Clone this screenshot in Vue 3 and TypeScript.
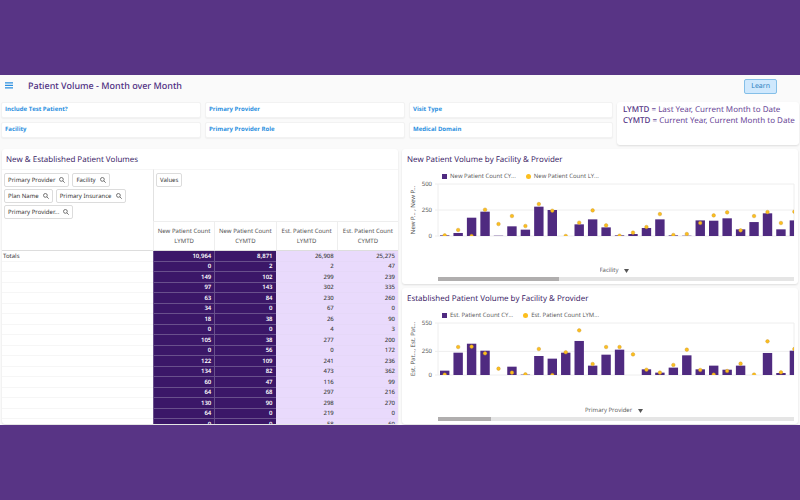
<script setup lang="ts">
interface Chart {
  id: string
  title: string
  legend: [string, string]
  axisTitle: string
  dimension: string
  max: number
  ticks: number[]
  bars: number[]
  dots: number[]
  thumb: number
}

const filters: string[] = [
  'Include Test Patient?', 'Primary Provider', 'Visit Type',
  'Facility', 'Primary Provider Role', 'Medical Domain',
]

const chips: string[] = ['Primary Provider', 'Facility', 'Plan Name', 'Primary Insurance', 'Primary Provider...']

const columns: [string, string][] = [
  ['New Patient Count', 'LYMTD'],
  ['New Patient Count', 'CYMTD'],
  ['Est. Patient Count', 'LYMTD'],
  ['Est. Patient Count', 'CYMTD'],
]

const rows: string[][] = [
  ['10,964', '8,871', '26,908', '25,275'],
  ['0', '2', '2', '47'],
  ['149', '102', '299', '239'],
  ['97', '143', '302', '335'],
  ['63', '84', '230', '260'],
  ['34', '0', '67', '0'],
  ['18', '38', '26', '90'],
  ['0', '0', '4', '3'],
  ['105', '38', '277', '200'],
  ['0', '56', '0', '172'],
  ['122', '109', '241', '236'],
  ['134', '82', '473', '362'],
  ['60', '47', '116', '99'],
  ['64', '68', '297', '216'],
  ['130', '90', '298', '270'],
  ['64', '0', '219', '0'],
  ['0', '0', '58', '60'],
]

const charts: Chart[] = [
  {
    id: 'new',
    title: 'New Patient Volume by Facility & Provider',
    legend: ['New Patient Count CY...', 'New Patient Count LY...'],
    axisTitle: 'New P... , New P...',
    dimension: 'Facility',
    max: 500,
    ticks: [500, 250, 0],
    bars: [6, 29, 176, 234, 3, 93, 61, 282, 250, 0, 112, 160, 83, 6, 19, 77, 160, 6, 3, 150, 147, 170, 64, 134, 218, 64, 150],
    dots: [6, 58, 0, 253, 115, 192, 96, 307, 243, 0, 128, 246, 102, 3, 32, 86, 211, 10, 19, 125, 198, 227, 54, 192, 230, 125, 234],
    thumb: 34,
  },
  {
    id: 'est',
    title: 'Established Patient Volume by Facility & Provider',
    legend: ['Est. Patient Count CY...', 'Est. Patient Count LYM...'],
    axisTitle: 'Est. Pat..., Est. Pat...',
    dimension: 'Primary Provider',
    max: 550,
    ticks: [550, 250, 0],
    bars: [46, 236, 331, 257, 0, 88, 4, 201, 173, 236, 360, 99, 215, 268, 0, 60, 25, 78, 208, 60, 99, 56, 99, 0, 233, 21, 257],
    dots: [4, 296, 300, 229, 67, 25, 7, 275, 0, 240, 472, 116, 296, 296, 218, 56, 25, 106, 268, 53, 4, 42, 120, 4, 356, 28, 275],
    thumb: 15,
  },
]

const PLOT_LEFT = 36
const PLOT_RIGHT = 392
const PLOT_HEIGHT = 52
const BASE = 56
const STEP = 13.45

const yOf = (value: number, max: number): number => BASE - (value / max) * PLOT_HEIGHT
const xOf = (index: number): number => 42.7 + index * STEP
</script>

<template>
  <main class="page">
    <div class="dashboard">
      <header class="topbar">
        <button class="menu" type="button" aria-label="Menu">
          <svg viewBox="0 0 8 7"><path d="M0 .8h8M0 3.3h8M0 5.8h8" /></svg>
        </button>
        <h1>Patient Volume - Month over Month</h1>
        <button class="learn" type="button">Learn</button>
      </header>

      <section class="controls">
        <div class="filters">
          <button v-for="filter in filters" :key="filter" class="filter" type="button">{{ filter }}</button>
        </div>
        <div class="info">
          <p><strong>LYMTD</strong> = Last Year, Current Month to Date</p>
          <p><strong>CYMTD</strong> = Current Year, Current Month to Date</p>
        </div>
      </section>

      <section class="panels">
        <article class="panel">
          <h2 class="table-title">New &amp; Established Patient Volumes</h2>
          <table>
            <colgroup>
              <col class="col-label" />
              <col v-for="n in 4" :key="n" />
            </colgroup>
            <thead>
              <tr class="values-row">
                <td rowspan="2" class="dims">
                  <div class="chips">
                    <button v-for="chip in chips" :key="chip" class="chip" type="button">
                      {{ chip }}
                      <svg viewBox="0 0 6 6"><circle cx="2.4" cy="2.4" r="1.9" /><path d="M3.8 3.8 5.7 5.7" /></svg>
                    </button>
                  </div>
                </td>
                <td colspan="4" class="values"><button class="chip" type="button">Values</button></td>
              </tr>
              <tr class="names-row">
                <th v-for="(column, i) in columns" :key="i" scope="col">{{ column[0] }}<br />{{ column[1] }}</th>
              </tr>
            </thead>
            <tbody>
              <tr v-for="(row, r) in rows" :key="r">
                <th scope="row">{{ r === 0 ? 'Totals' : '' }}</th>
                <td v-for="(value, c) in row" :key="c" :class="c < 2 ? 'dark' : 'light'">{{ value }}</td>
              </tr>
            </tbody>
          </table>
        </article>

        <div class="chart-column">
          <article v-for="chart in charts" :key="chart.id" class="panel chart">
            <h2>{{ chart.title }}</h2>
            <div class="legend">
              <span class="key"><i class="square"></i>{{ chart.legend[0] }}</span>
              <span class="key"><i class="dot"></i>{{ chart.legend[1] }}</span>
            </div>
            <svg class="plot" viewBox="0 0 396 58" role="img" :aria-label="chart.title">
              <defs>
                <clipPath :id="`clip-${chart.id}`">
                  <rect :x="PLOT_LEFT" y="0" :width="PLOT_RIGHT - PLOT_LEFT" :height="BASE" />
                </clipPath>
              </defs>
              <text class="axis-title" transform="translate(13 30) rotate(-90)">{{ chart.axisTitle }}</text>
              <g v-for="tick in chart.ticks" :key="tick">
                <line class="grid" :x1="PLOT_LEFT - 3" :x2="PLOT_RIGHT" :y1="yOf(tick, chart.max)" :y2="yOf(tick, chart.max)" />
                <text class="tick" x="30" :y="yOf(tick, chart.max) + 2">{{ tick }}</text>
              </g>
              <path class="grid" :d="`M${PLOT_LEFT} 4V${BASE}M${PLOT_RIGHT} 4V${BASE}`" />
              <g :clip-path="`url(#clip-${chart.id})`">
                <rect
                  v-for="(bar, i) in chart.bars" :key="`b${i}`" class="bar"
                  :x="xOf(i) - 4.7" :y="yOf(bar, chart.max)" width="9.4" :height="BASE - yOf(bar, chart.max)"
                />
                <circle
                  v-for="(dot, i) in chart.dots" :key="`d${i}`" class="point"
                  :cx="xOf(i)" :cy="yOf(dot, chart.max)" r="1.8"
                />
              </g>
            </svg>
            <div class="footer">
              <label class="dimension">
                <select :aria-label="`${chart.title} dimension`"><option>{{ chart.dimension }}</option></select>
                <svg viewBox="0 0 5 4"><path d="M0 0h5L2.5 4z" /></svg>
              </label>
              <div class="track"><div class="thumb" :style="{ width: `${chart.thumb}%` }"></div></div>
            </div>
          </article>
        </div>
      </section>
    </div>
  </main>
</template>

<style>
body {
  background: #583485;
}
</style>

<style scoped>
* {
  box-sizing: border-box;
}
.page {
  height: 100vh;
  padding: 75px 0;
  background: #583485;
  font-family: "Noto Sans", "Open Sans", sans-serif;
  text-rendering: geometricPrecision;
  color: #555;
}
.dashboard {
  display: flex;
  flex-direction: column;
  height: 100%;
  overflow: hidden;
  background: #fafafa;
}
button,
select {
  margin: 0;
  font-family: inherit;
  text-rendering: inherit;
  cursor: pointer;
}
h1,
h2,
p {
  margin: 0;
}
h2,
.filter,
.legend,
.footer {
  font-family: "Open Sans", "Noto Sans", sans-serif;
}
.topbar {
  display: flex;
  flex: none;
  align-items: center;
  height: 26px;
  padding: 0 23px 5px 5px;
}
.menu {
  display: flex;
  padding: 0;
  border: 0;
  background: none;
}
.menu svg {
  width: 8px;
  height: 7px;
  stroke: #2b8fe0;
  stroke-width: 1.2;
}
h1 {
  flex: 1;
  padding-left: 15px;
  font-size: 9px;
  font-weight: 500;
  line-height: 14px;
  color: #4f2f82;
}
.learn {
  height: 15px;
  margin-top: 2px;
  padding: 0 6px;
  border: 1px solid #84bfe8;
  border-radius: 2px;
  background: #cfe8fd;
  font-size: 7px;
  line-height: 13px;
  color: #2c80bd;
}
.controls {
  display: grid;
  flex: none;
  grid-template-columns: minmax(0, 612fr) minmax(0, 182fr);
  gap: 4px;
  padding: 1px 1px 4px;
}
.filters {
  display: grid;
  grid-template-columns: 50fr 50fr 51fr;
  gap: 4px;
  align-content: start;
}
.filter {
  height: 16px;
  padding: 0 3px 1px;
  border: 1px solid #f2f2f2;
  border-radius: 2px;
  background: #fff;
  box-shadow: 0 1px 1px #f0f0f0;
  font-size: 6px;
  font-weight: 700;
  line-height: 13px;
  text-align: left;
  color: #2b8fe0;
}
.info {
  height: 43px;
  padding: 2px 6px;
  border-radius: 3px;
  background: #fff;
  box-shadow: 0 1px 2px #ddd;
  font-size: 8px;
  line-height: 11px;
  white-space: nowrap;
  color: #6a4797;
}
.info strong {
  font-weight: 500;
  color: #4f2f82;
}
.panels {
  display: grid;
  flex: 1;
  grid-template-columns: minmax(0, 1fr) minmax(0, 1fr);
  gap: 4px;
  min-height: 0;
  padding: 0 2px 1px;
}
.panel {
  overflow: hidden;
  border-radius: 3px;
  background: #fff;
  box-shadow: 0 1px 2px #ddd;
}
h2 {
  font-size: 8px;
  font-weight: 500;
  line-height: 12px;
  color: #33145e;
}
.table-title {
  padding: 5px 4px 3px;
}
table {
  width: 100%;
  table-layout: fixed;
  border-collapse: separate;
  border-spacing: 0;
  font-size: 6px;
  line-height: 9px;
}
.col-label {
  width: 151px;
}
th,
td {
  padding: 0;
  font-weight: 400;
}
.dims {
  vertical-align: top;
  border-top: 1px solid #f6f6f6;
  border-bottom: 1px solid #ddd;
}
.values {
  padding: 3px 2px;
  vertical-align: top;
  border-top: 1px solid #f6f6f6;
  border-left: 1px solid #e2e2e2;
}
.values-row {
  height: 52px;
}
.names-row {
  height: 30px;
}
.names-row th {
  border-top: 1px solid #eee;
  border-bottom: 1px solid #ddd;
  border-left: 1px solid #eee;
  line-height: 10px;
  white-space: nowrap;
  color: #555;
}
.chips {
  display: flex;
  flex-wrap: wrap;
  gap: 2px 3px;
  padding: 3px 2px;
}
.chip {
  display: flex;
  align-items: center;
  gap: 4px;
  height: 14px;
  padding: 0 3px;
  border: 1px solid #dcdcdc;
  border-radius: 2px;
  background: #fff;
  font-size: 6px;
  line-height: 12px;
  color: #333;
}
.chip svg {
  width: 6px;
  height: 6px;
  fill: none;
  stroke: #555;
  stroke-width: 0.8;
}
tbody tr {
  height: 11px;
}
tbody tr:nth-child(even) {
  height: 10px;
}
tbody th {
  padding-left: 1px;
  border-bottom: 1px solid #f6f6f6;
  text-align: left;
  color: #333;
}
tbody td {
  padding-right: 3px;
  text-align: right;
}
.dark {
  border-bottom: 1px solid #69508c;
  border-left: 1px solid #69508c;
  background: #3b1768;
  font-weight: 600;
  color: #fff;
}
.light {
  border-bottom: 1px solid #e6d8f8;
  background: #e9dafc;
  font-weight: 500;
  color: #444;
}
.chart-column {
  display: grid;
  grid-template-rows: 135fr 136fr;
  gap: 4px;
  min-height: 0;
}
.chart {
  display: flex;
  flex-direction: column;
  padding: 5px 0 3px;
}
.chart h2 {
  padding: 0 5px;
}
.legend {
  display: flex;
  gap: 10px;
  padding: 6px 0 0 40px;
  font-size: 6px;
  line-height: 8px;
  color: #555;
}
.key {
  display: flex;
  align-items: center;
  gap: 3px;
}
.square,
.dot {
  width: 5px;
  height: 5px;
  background: #4f2a80;
}
.dot {
  border-radius: 50%;
  background: #fcbf1e;
}
.plot {
  width: 100%;
}
.plot text {
  font-size: 6px;
  fill: #555;
}
.axis-title {
  text-anchor: middle;
}
.tick {
  text-anchor: end;
}
.grid {
  fill: none;
  stroke: #eee;
  stroke-width: 1;
}
.bar {
  fill: #4f2a80;
}
.point {
  fill: #fcbf1e;
  stroke: #c8922a;
  stroke-width: 0.4;
}
.footer {
  display: flex;
  flex-direction: column;
  gap: 2px;
  margin-top: auto;
  padding: 0 4px 0 36px;
}
.dimension {
  display: flex;
  align-items: center;
  align-self: center;
  gap: 5px;
  padding-right: 4px;
}
.dimension select {
  padding: 0;
  border: 0;
  appearance: none;
  background: none;
  font-size: 6px;
  line-height: 9px;
  color: #555;
}
.dimension svg {
  width: 5px;
  height: 4px;
  fill: #555;
}
.track {
  height: 4px;
  background: #e5e5e5;
}
.thumb {
  height: 100%;
  background: #b0aeae;
}
</style>
